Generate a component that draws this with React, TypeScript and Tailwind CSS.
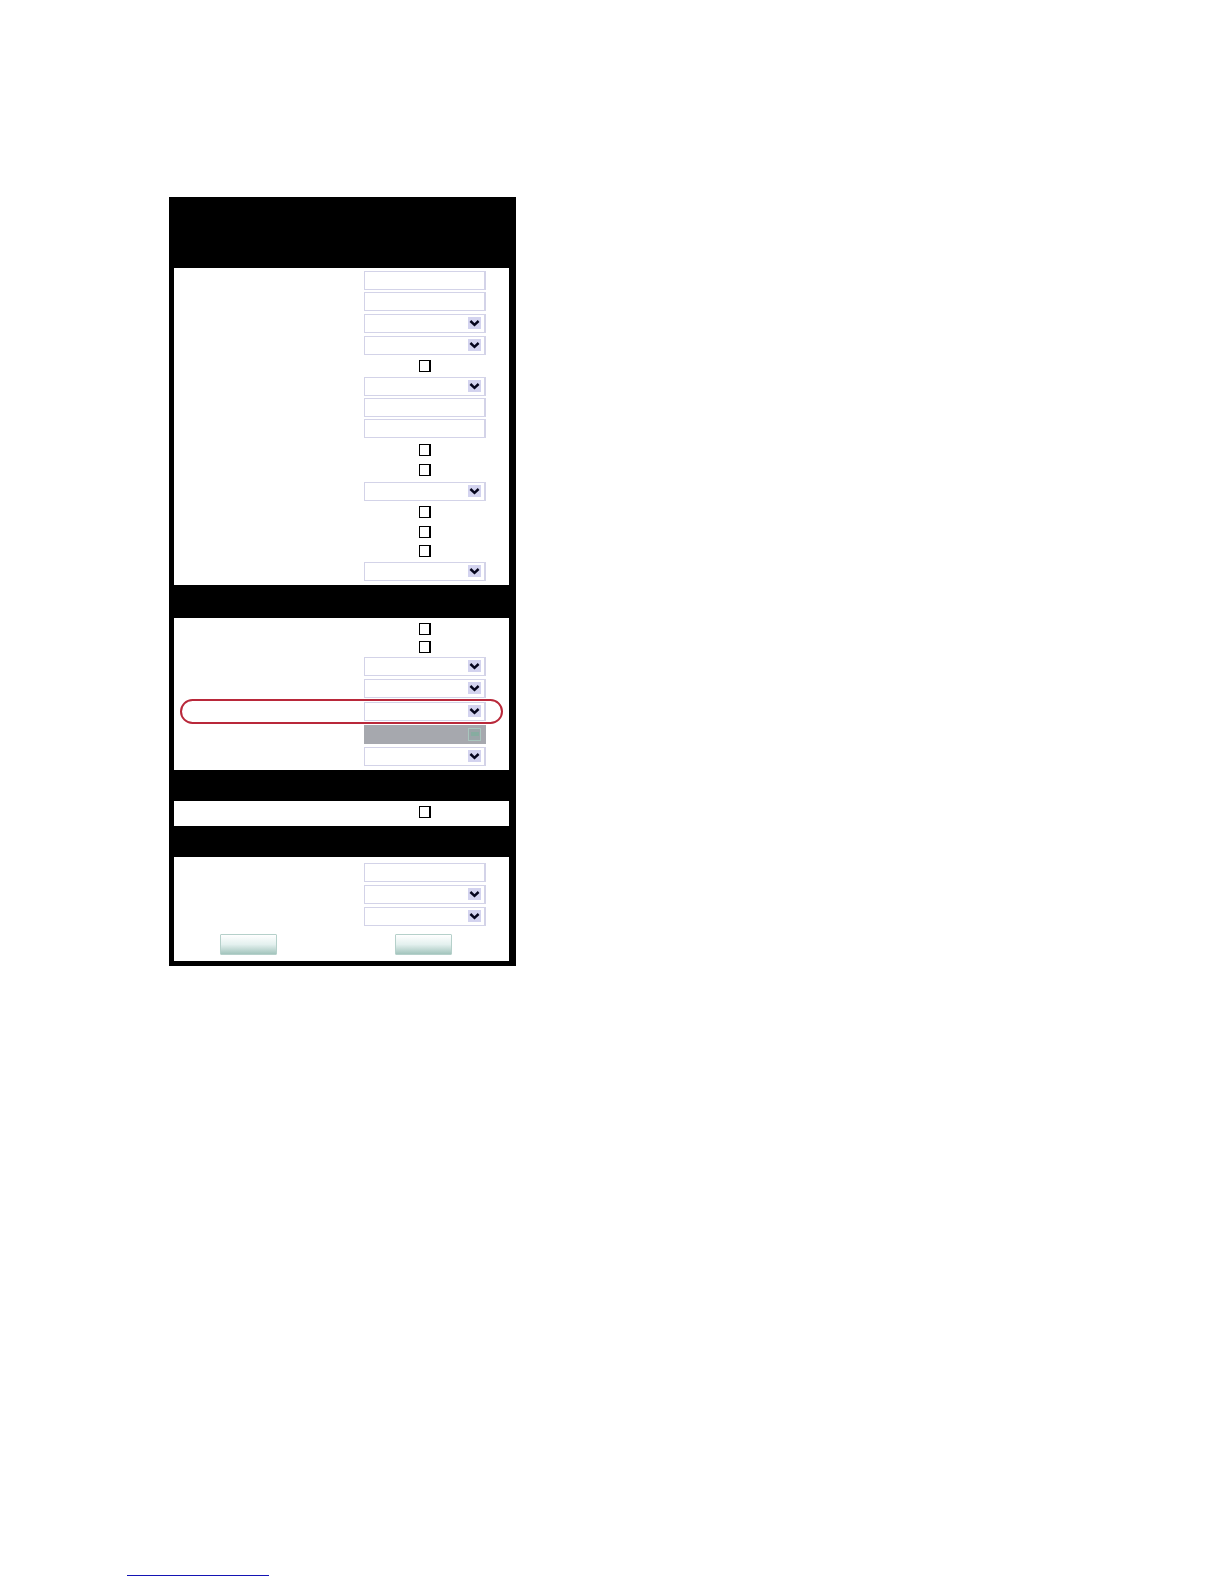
import React from "react";

type Control = "text" | "select" | "check" | "disabled";

function Chevron() {
  return (
    <svg
      viewBox="0 0 13 12"
      aria-hidden="true"
      className="pointer-events-none absolute top-[3px] right-[5px] h-3 w-[13px] bg-[#d3d3ef]"
    >
      <path d="M2.4 4 L6.5 7.8 L10.6 4" fill="none" stroke="#05051c" strokeWidth="2.5" />
    </svg>
  );
}

function DisabledMark() {
  return (
    <svg
      viewBox="0 0 13 13"
      aria-hidden="true"
      className="pointer-events-none absolute top-[3px] right-[5px] size-[13px]"
    >
      <rect x="0.5" y="0.5" width="12" height="12" fill="#9aa5a8" stroke="#a9c6be" />
      <rect x="3" y="4" width="8" height="4" fill="#86aca0" />
    </svg>
  );
}

function Field({ kind, name }: { kind: Control; name: string }) {
  if (kind === "text") {
    return (
      <input
        type="text"
        aria-label={name}
        className="block h-[19px] w-full border border-r-2 border-[#d3d3e8] bg-white px-1 text-xs outline-none"
      />
    );
  }
  if (kind === "check") {
    return (
      <input
        type="checkbox"
        aria-label={name}
        className="mx-auto block size-3 appearance-none border border-r-2 border-black bg-white"
      />
    );
  }
  if (kind === "disabled") {
    return (
      <div className="relative">
        <select aria-label={name} disabled className="block h-[19px] w-full appearance-none bg-[#a6a8ae] opacity-100" />
        <DisabledMark />
      </div>
    );
  }
  return (
    <div className="relative">
      <select
        aria-label={name}
        className="block h-[19px] w-full appearance-none border border-r-2 border-[#d3d3e8] bg-white outline-none"
      />
      <Chevron />
    </div>
  );
}

function Row({ kind, name, size }: { kind: Control; name: string; size: string }) {
  return (
    <div className={"flex items-center justify-end pr-[23px] " + size}>
      <div className="w-[122px]">
        <Field kind={kind} name={name} />
      </div>
    </div>
  );
}

const general: [Control, string][] = [
  ["text", "h-[21px]"],
  ["text", "h-[21px]"],
  ["select", "h-[22px]"],
  ["select", "h-[22px]"],
  ["check", "h-5"],
  ["select", "h-[21px]"],
  ["text", "h-[21px]"],
  ["text", "h-[21px]"],
  ["check", "h-[21px]"],
  ["check", "h-5"],
  ["select", "h-[22px]"],
  ["check", "h-5"],
  ["check", "h-[19px]"],
  ["check", "h-[19px]"],
  ["select", "h-[22px]"],
];

function PushButton({ name }: { name: string }) {
  return (
    <button
      type="button"
      aria-label={name}
      className="h-[21px] w-[57px] rounded-[1px] border border-[#b5d0ca] bg-linear-to-b from-white via-[#e3f0ee] to-[#a3c5bd]"
    />
  );
}

export default function App() {
  return (
    <main className="flex min-h-screen flex-col justify-between bg-white pt-[197px] pb-2 font-['Liberation_Sans',sans-serif]">
      <form className="ml-[169px] w-[347px] bg-black pt-[71px] pr-[7px] pb-[5px] pl-[5px]">
        <section className="bg-white pt-[2px] pb-[3px]">
          {general.map(([kind, size], i) => (
            <Row key={i} kind={kind} name={`General ${i + 1}`} size={size} />
          ))}
        </section>

        <section className="mt-[33px] bg-white pt-[2px] pb-[3px]">
          <Row kind="check" name="Option 1" size="h-[18px]" />
          <Row kind="check" name="Option 2" size="h-[17px]" />
          <Row kind="select" name="Option 3" size="h-[22px]" />
          <Row kind="select" name="Option 4" size="h-[22px]" />
          <div className="mx-[6px] flex h-[25px] items-center justify-end rounded-full border-2 border-[#b9283a] pr-[15px]">
            <div className="w-[122px]">
              <Field kind="select" name="Option 5" />
            </div>
          </div>
          <Row kind="disabled" name="Option 6" size="h-[21px]" />
          <Row kind="select" name="Option 7" size="h-[22px]" />
        </section>

        <section className="mt-[31px] bg-white pt-px pb-1">
          <Row kind="check" name="Enable" size="h-5" />
        </section>

        <section className="mt-[31px] bg-white pt-1 pb-[6px]">
          <Row kind="text" name="Value" size="h-[22px]" />
          <Row kind="select" name="Choice 1" size="h-[22px]" />
          <Row kind="select" name="Choice 2" size="h-[22px]" />
          <div className="flex justify-between pt-[7px] pr-[57px] pl-[46px]">
            <PushButton name="Apply" />
            <PushButton name="Cancel" />
          </div>
        </section>
      </form>

      <a href="#top" aria-label="Back to top" className="ml-[127px] block h-4 w-[142px] border-b border-solid border-b-[#1414b4]" />
    </main>
  );
}
